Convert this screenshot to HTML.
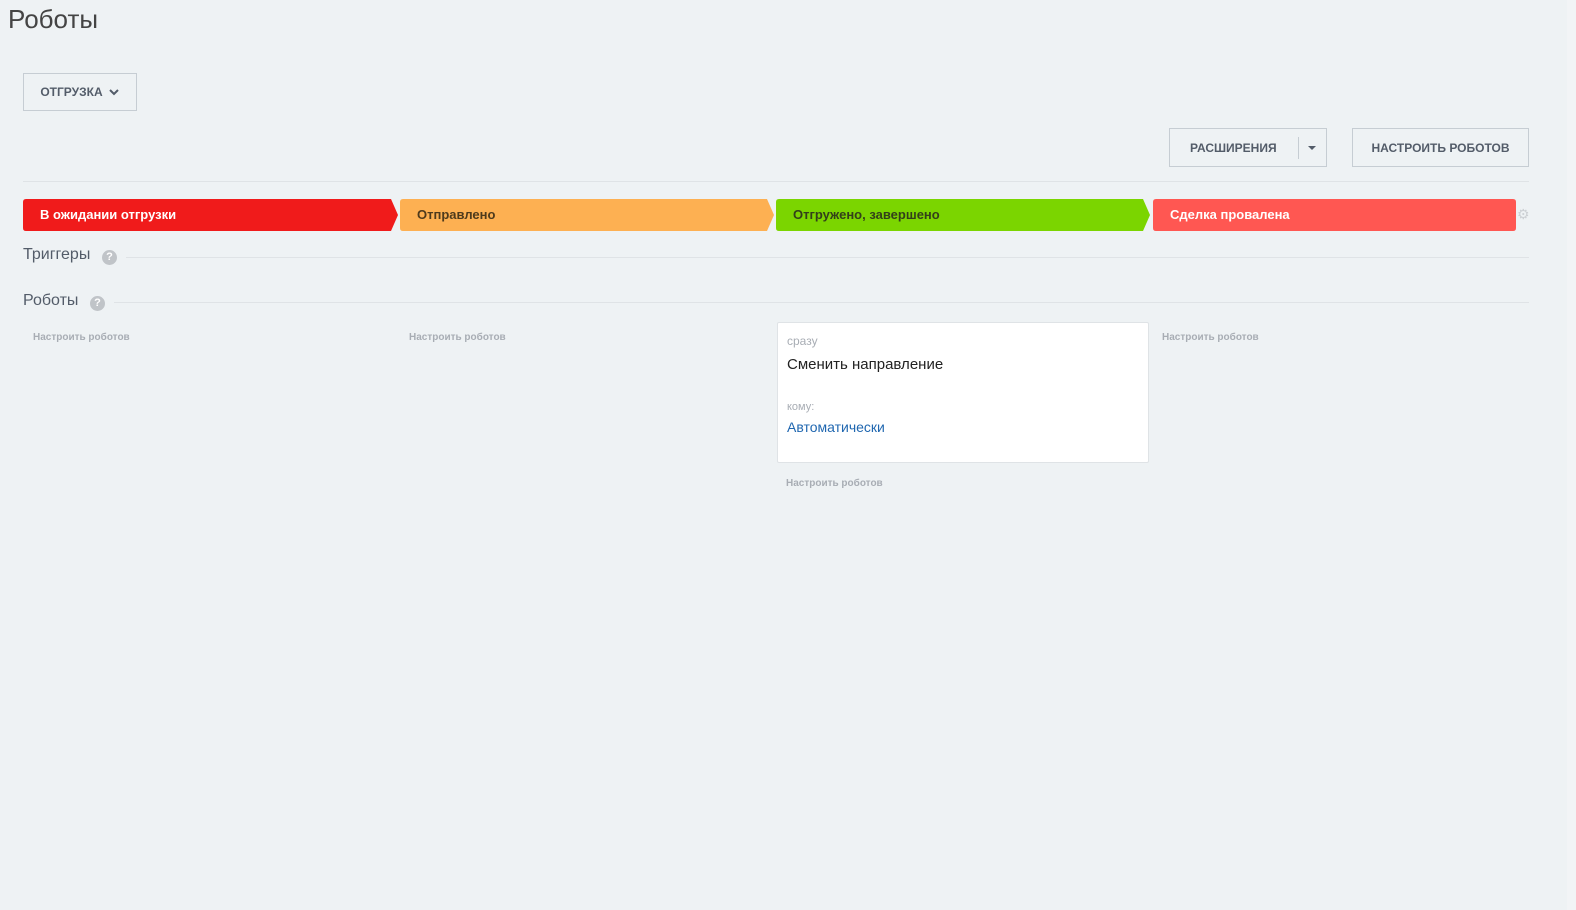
<!DOCTYPE html>
<html><head><meta charset="utf-8"><style>
*{box-sizing:border-box;margin:0;padding:0}
body{width:1576px;height:910px;background:#eef2f4;font-family:"Liberation Sans",sans-serif;position:relative;overflow:hidden}
.a{position:absolute}
.btn{position:absolute;border:1px solid #c6cdd3;background:transparent;font-weight:bold;font-size:12px;color:#535c69;display:flex;align-items:center;justify-content:center}
.line{position:absolute;height:1px;background:#dfe3e6}
.st{position:absolute;top:199px;height:32px;color:#fff;font-weight:bold;font-size:13px;line-height:32px;padding-left:17px}
.hint{position:absolute;font-size:10px;color:#a8adb4;font-weight:bold}
.q{position:absolute;width:15px;height:15px;border-radius:50%;background:#c0c4c8;color:#fff;font-size:11px;font-weight:bold;text-align:center;line-height:15px}
</style></head><body>
<div class="a" style="left:8px;top:4px;font-size:26px;color:#444">Роботы</div>
<div class="btn" style="left:23px;top:73px;width:114px;height:38px">ОТГРУЗКА <svg width="12" height="10" style="margin-left:5px" viewBox="0 0 12 10"><path d="M2 3l4 4 4-4" stroke="#535c69" stroke-width="2" fill="none"/></svg></div>
<div class="btn" style="left:1169px;top:128px;width:158px;height:39px;justify-content:flex-start;padding-left:20px">РАСШИРЕНИЯ<span style="position:absolute;left:128px;top:8px;width:1px;height:22px;background:#c6cdd3"></span><span style="position:absolute;left:138px;top:17px;border:4px solid transparent;border-top:4px solid #535c69"></span></div>
<div class="btn" style="left:1352px;top:128px;width:177px;height:39px">НАСТРОИТЬ РОБОТОВ</div>
<div class="line" style="left:23px;top:181px;width:1506px"></div>
<svg class="a" style="left:23px;top:199px" width="1494" height="32">
<path d="M0 3Q0 0 3 0H368L375 16L368 32H3Q0 32 0 29Z" fill="#f01b1b"/>
<path d="M377 3Q377 0 380 0H744L751 16L744 32H380Q377 32 377 29Z" fill="#fdb052"/>
<path d="M753 3Q753 0 756 0H1120L1127 16L1120 32H756Q753 32 753 29Z" fill="#7bd500"/>
<path d="M1130 3Q1130 0 1133 0H1490Q1493 0 1493 3V29Q1493 32 1490 32H1133Q1130 32 1130 29Z" fill="#ff5752"/>
</svg>
<div class="st" style="left:23px">В ожидании отгрузки</div>
<div class="st" style="left:400px;color:#4e3a1c">Отправлено</div>
<div class="st" style="left:776px;color:#33401a">Отгружено, завершено</div>
<div class="st" style="left:1153px">Сделка провалена</div>
<div class="a" style="left:1517px;top:206px;color:#ccd0d4;font-size:14px">⚙</div>
<div class="a" style="left:23px;top:246px;font-size:16px;color:#535c69">Триггеры</div>
<div class="q" style="left:102px;top:250px">?</div>
<div class="line" style="left:126px;top:257px;width:1403px"></div>
<div class="a" style="left:23px;top:292px;font-size:16px;color:#535c69">Роботы</div>
<div class="q" style="left:90px;top:296px">?</div>
<div class="line" style="left:114px;top:302px;width:1415px"></div>
<div class="hint" style="left:33px;top:332px">Настроить роботов</div>
<div class="hint" style="left:409px;top:332px">Настроить роботов</div>
<div class="hint" style="left:1162px;top:332px">Настроить роботов</div>
<div class="a" style="left:777px;top:322px;width:372px;height:141px;background:#fff;border:1px solid #dfe3e6;border-radius:2px">
<div class="a" style="left:9px;top:11px;font-size:12px;color:#a8adb4">сразу</div>
<div class="a" style="left:9px;top:33px;font-size:15px;color:#222">Сменить направление</div>
<div class="a" style="left:9px;top:78px;font-size:11px;color:#a8adb4">кому:</div>
<div class="a" style="left:9px;top:96px;font-size:14px;color:#2067b0">Автоматически</div>
</div>
<div class="hint" style="left:786px;top:478px">Настроить роботов</div>
<div class="a" style="left:1567px;top:0;width:9px;height:910px;background:#f2f4f6"></div>
</body></html>
